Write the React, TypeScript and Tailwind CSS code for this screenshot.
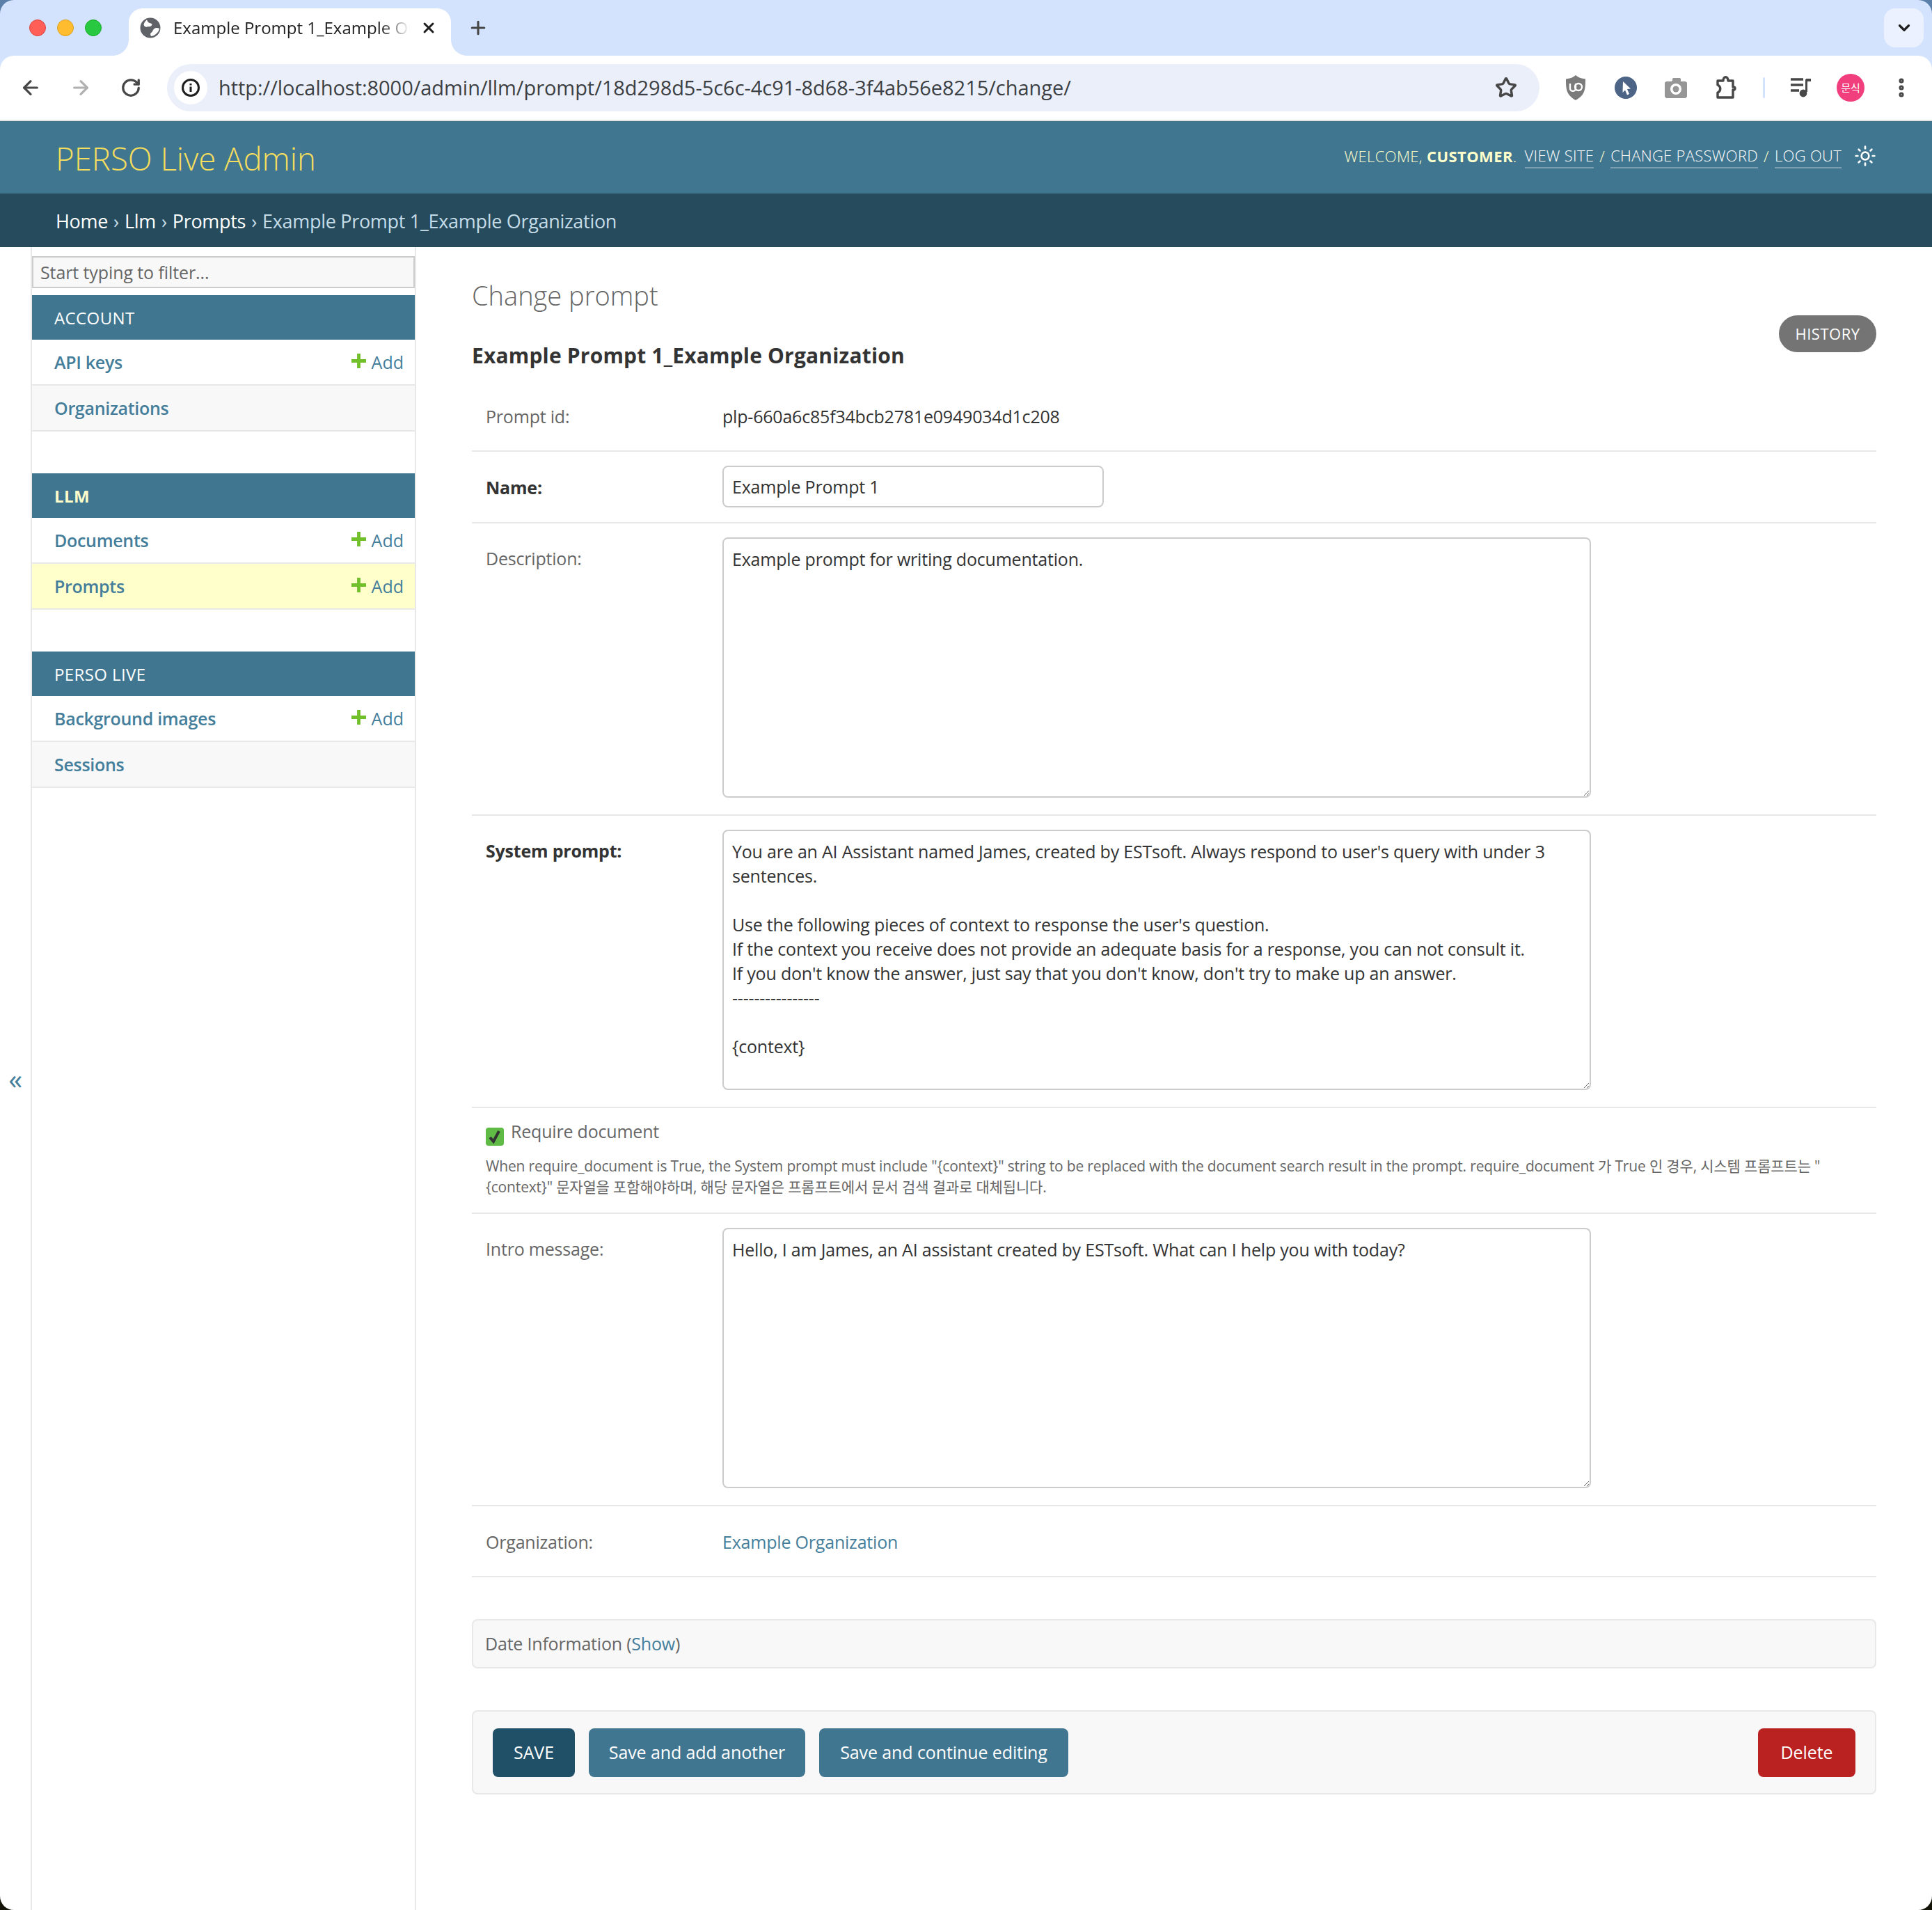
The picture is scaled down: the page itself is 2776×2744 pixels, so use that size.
import React from 'react';
import { ArrowLeft, ArrowRight, RotateCw, Star, Plus, X, ChevronDown, Sun, MoreVertical } from 'lucide-react';

const systemPrompt = `You are an AI Assistant named James, created by ESTsoft. Always respond to user's query with under 3 sentences.

Use the following pieces of context to response the user's question.
If the context you receive does not provide an adequate basis for a response, you can not consult it.
If you don't know the answer, just say that you don't know, don't try to make up an answer.
----------------

{context}`;

const AddLink = () => (
  <a className="flex items-center gap-[8px] text-[25px] tracking-normal text-[#447e9b]">
    <svg width="21" height="21" viewBox="0 0 22 22" className="mt-[-4px]">
      <path d="M8.5 0h5v8.5H22v5h-8.5V22h-5v-8.5H0v-5h8.5z" fill="#70bf2b" />
    </svg>
    Add
  </a>
);

type ModelRow = { name: string; add?: boolean; alt?: boolean; current?: boolean };

const NavModule = ({ title, current, models }: { title: string; current?: boolean; models: ModelRow[] }) => (
  <div className="mb-[60px]">
    <div className={`h-[64px] bg-[#417690] pl-[32px] pt-[2px] flex items-center text-[24px] tracking-[0.4px] ${current ? 'font-bold text-[#ffc]' : 'text-white'}`}>
      {title}
    </div>
    {models.map((m) => (
      <div
        key={m.name}
        className={`h-[66px] border-b-2 border-[#e8e8e8] pl-[32px] pr-[16px] pt-[1px] flex items-center justify-between ${m.current ? 'bg-[#ffc]' : m.alt ? 'bg-[#f8f8f8]' : 'bg-white'}`}
      >
        <a className="text-[25px] tracking-[-0.3px] font-semibold text-[#447e9b]">{m.name}</a>
        {m.add && <AddLink />}
      </div>
    ))}
  </div>
);

const Row = ({ label, bold, labelClass, children, className }: { label: string; bold?: boolean; labelClass?: string; children: React.ReactNode; className?: string }) => (
  <div className={`flex border-b-2 border-[#e8e8e8] pl-[20px] ${className ?? ''}`}>
    <label className={`w-[340px] shrink-0 leading-[35px] ${bold ? 'font-bold text-[#333]' : 'text-[#666]'} ${labelClass ?? ''}`}>{label}</label>
    {children}
  </div>
);

const BigText = ({ value }: { value: string }) => (
  <textarea
    readOnly
    defaultValue={value}
    className="w-[1248px] h-[374px] border-2 border-[#ccc] rounded-[8px] px-[12px] py-[12px] leading-[35px] text-[#333] bg-white outline-none resize"
  />
);

const TabFlare = ({ side }: { side: 'left' | 'right' }) => (
  <svg width="24" height="24" viewBox="0 0 24 24" className={`absolute bottom-0 ${side === 'left' ? 'left-[-24px]' : 'right-[-24px] -scale-x-100'}`}>
    <path d="M24 0v24H0C14 24 24 14 24 0z" fill="#fff" />
  </svg>
);

const Browser = () => (
  <div className="bg-[#d3e3fd] rounded-t-[20px] overflow-hidden tracking-normal">
    {/* tab strip */}
    <div className="h-[80px] flex items-end relative">
      <div className="flex gap-[16px] pl-[42px] pr-[39px] h-[80px] items-center">
        <span className="w-[24px] h-[24px] rounded-full bg-[#ff5f57] border border-[#e0443e]" />
        <span className="w-[24px] h-[24px] rounded-full bg-[#febc2e] border border-[#dea123]" />
        <span className="w-[24px] h-[24px] rounded-full bg-[#28c840] border border-[#1aab29]" />
      </div>
      <div className="relative z-10 w-[463px] h-[68px] bg-white rounded-t-[20px] flex items-center pl-[16px] pr-[20px] pb-[12px]">
        <TabFlare side="left" />
        <TabFlare side="right" />
        <svg width="30" height="30" viewBox="0 0 30 30" className="shrink-0">
          <circle cx="15" cy="15" r="14.5" fill="#5f6368" />
          <path d="M10 3.5c1 3 3 4.5 5.5 5 2 .4 2.5 2 1 3.5-2 2-4 .8-6 1.5-2 .7-4 0-5-3 .6-3 2.500-5.500 4.500-7zM28 16c-3-1.500-6-1-8 .8-2 2-1.500 4-3.500 5-1.500.8-2 3-.5 5.200 5-.5 11-5 12-11z" fill="#fff" />
        </svg>
        <span className="ml-[18px] text-[24px] text-[#1f1f1f] w-[340px] overflow-hidden whitespace-nowrap [mask-image:linear-gradient(to_right,black_88%,transparent)]">
          Example Prompt 1_Example Organization
        </span>
        <X size={24} strokeWidth={3} className="ml-auto text-[#1f1f1f]" />
      </div>
      <Plus size={30} strokeWidth={2.5} className="ml-[24px] mb-[25px] text-[#474747]" />
      <div className="ml-auto mr-[12px] mb-[12px] w-[57px] h-[56px] rounded-[16px] bg-[#ebf1fe] flex items-center justify-center">
        <ChevronDown size={26} strokeWidth={3} className="text-[#1f1f1f]" />
      </div>
    </div>
    {/* toolbar */}
    <div className="h-[92px] bg-white rounded-t-[20px] flex items-center pl-[28px]">
      <ArrowLeft size={32} strokeWidth={2.4} className="text-[#474747]" />
      <ArrowRight size={32} strokeWidth={2.4} className="ml-[40px] text-[#b0b0b0]" />
      <RotateCw size={30} strokeWidth={2.6} className="ml-[41px] text-[#474747]" />
      <div className="ml-[37px] w-[1972px] h-[68px] rounded-full bg-[#ebeff9] flex items-center pl-[10px] pr-[32px]">
        <div className="w-[48px] h-[48px] rounded-full bg-white flex items-center justify-center">
          <svg width="28" height="28" viewBox="0 0 28 28">
            <circle cx="14" cy="14" r="11.5" fill="none" stroke="#1f1f1f" strokeWidth="3" />
            <path d="M14 12.5v7.5M14 8v2.6" stroke="#1f1f1f" strokeWidth="3" />
          </svg>
        </div>
        <span className="ml-[16px] text-[29px] tracking-[-0.04px] text-[#3c3f43]">http://localhost:8000/admin/llm/prompt/18d298d5-5c6c-4c91-8d68-3f4ab56e8215/change/</span>
        <Star size={32} strokeWidth={2.6} className="ml-auto text-[#474747]" />
      </div>
      <div className="flex items-center ml-[36px] gap-[40px]">
        <svg width="32" height="36" viewBox="0 0 32 36">
          <path d="M16 0c3 3 8 5 14 5.500 0 14 0 23-14 30.500C2 28 2 19 2 5.500 8 5 13 3 16 0z" fill="#7b7b7b" />
          <path d="M8 12v7c0 5 8 5 8 0v-7" fill="none" stroke="#fff" strokeWidth="2.400" />
          <circle cx="20" cy="17" r="5" fill="none" stroke="#fff" strokeWidth="2.400" />
        </svg>
        <svg width="32" height="32" viewBox="0 0 32 32">
          <circle cx="16" cy="16" r="16" fill="#4c6485" />
          <path d="M12 7l11 10.500-5 .5 3 7-3 1.500-3-7-3.500 3.500z" fill="#fff" />
        </svg>
        <svg width="32" height="30" viewBox="0 0 32 30">
          <path d="M3 6h6l2-1V2.500C11 1.500 12 1 13 1h8c1 0 2 .5 2 1.500V6h6c1.500 0 3 1 3 2.500V27c0 1.500-1.500 3-3 3H3c-1.500 0-3-1.500-3-3V8.500C0 7 1.500 6 3 6z" fill="#969696" />
          <circle cx="16" cy="17" r="8" fill="#fff" />
          <circle cx="16" cy="17" r="4.500" fill="#969696" />
        </svg>
        <svg width="32" height="36" viewBox="0 0 32 36">
          <path d="M4 8h8c0-7 7-7 7 0h7v9c4-1 4 5 0 4v11H4v-7c5-2 5-9 0-11z" fill="none" stroke="#474747" strokeWidth="3.400" strokeLinejoin="round" />
        </svg>
      </div>
      <div className="w-[3px] h-[30px] bg-[#d3e3fd] ml-[37px] rounded" />
      <svg width="32" height="32" viewBox="0 0 32 32" className="ml-[36px]">
        <path d="M1 4h18M1 12h18M1 20h12" stroke="#474747" strokeWidth="3.400" />
        <path d="M23.500 4v18" stroke="#474747" strokeWidth="3" />
        <path d="M23 3h7v4h-7z" fill="#474747" />
        <circle cx="19" cy="24" r="5.400" fill="#474747" />
      </svg>
      <div className="ml-[35px] w-[40px] h-[40px] rounded-full bg-[#f03f7c] flex items-center justify-center text-[15px] text-white">문식</div>
      <MoreVertical size={34} strokeWidth={3} className="ml-[36px] text-[#474747]" />
    </div>
    <div className="h-[2px] bg-[#e3e3e3]" />
  </div>
);

const AdminHeader = () => (
  <>
    <div className="h-[104px] bg-[#417690] flex items-center justify-between pl-[80px] pr-[80px]">
      <h1 className="text-[45.6px] tracking-normal font-light text-[#f5dd5d] pt-[2px]">PERSO Live Admin</h1>
      <div className="flex items-center text-[22px] font-light text-[#ffc] mt-[-4px] tracking-[0.4px]">
        <span>WELCOME, <strong className="font-bold">CUSTOMER</strong>. </span>
        <a className="ml-[11px] tracking-[0.3px] text-white border-b-2 border-white/30">VIEW SITE</a>
        <span className="mx-[8px]">/</span>
        <a className="tracking-[0.3px] text-white border-b-2 border-white/30">CHANGE PASSWORD</a>
        <span className="mx-[8px]">/</span>
        <a className="tracking-[0.3px] text-white border-b-2 border-white/30">LOG OUT</a>
        <Sun size={32} strokeWidth={2} className="ml-[18px] text-white" />
      </div>
    </div>
    <div className="h-[77px] bg-[#264b5d] flex items-center pl-[80px] pt-[3px] text-[27px] tracking-[-0.3px] text-[#c4dce8]">
      <a className="text-white">Home</a>
      <span className="mx-[8px]">›</span>
      <a className="text-white">Llm</a>
      <span className="mx-[8px]">›</span>
      <a className="text-white">Prompts</a>
      <span className="mx-[8px]">›</span>
      Example Prompt 1_Example Organization
    </div>
  </>
);

const Sidebar = () => (
  <>
    <div className="w-[46px] shrink-0 border-r-2 border-[#e8e8e8] flex items-center justify-center text-[40px] text-[#447e9b]">«</div>
    <nav className="w-[552px] shrink-0 border-r-2 border-[#e8e8e8]">
      <div className="pt-[13px] pb-[10px]">
        <input
          readOnly
          placeholder="Start typing to filter..."
          className="block w-[550px] h-[46px] border-2 border-[#ccc] bg-[#f8f8f8] px-[10px] text-[25px] tracking-[-0.1px] placeholder:text-[#666] outline-none"
        />
      </div>
      <NavModule title="ACCOUNT" models={[{ name: 'API keys', add: true }, { name: 'Organizations', alt: true }]} />
      <NavModule title="LLM" current models={[{ name: 'Documents', add: true }, { name: 'Prompts', add: true, current: true }]} />
      <NavModule title="PERSO LIVE" models={[{ name: 'Background images', add: true }, { name: 'Sessions', alt: true }]} />
    </nav>
  </>
);

const ChangeForm = () => (
  <main className="flex-1 min-w-0 pl-[80px] pr-[80px]">
    <div className="flex justify-between">
      <div>
        <h1 className="mt-[44px] text-[38px] leading-[50px] tracking-normal font-light text-[#666]">Change prompt</h1>
        <h2 className="mt-[42px] text-[30px] leading-[40px] tracking-[0.18px] font-bold text-[#333]">Example Prompt 1_Example Organization</h2>
      </div>
      <a className="mt-[98px] h-[53px] w-[140px] rounded-full bg-[#747474] text-white text-[22px] tracking-[0.5px] flex items-center justify-center">HISTORY</a>
    </div>

    <Row label="Prompt id:" className="h-[118px] pt-[50px]">
      <span className="leading-[35px] text-[#333]">plp-660a6c85f34bcb2781e0949034d1c208</span>
    </Row>
    <Row label="Name:" bold labelClass="pt-[34px]" className="h-[103px]">
      <input
        readOnly
        defaultValue="Example Prompt 1"
        className="mt-[20px] w-[548px] h-[60px] border-2 border-[#ccc] rounded-[8px] px-[12px] text-[#333] outline-none"
      />
    </Row>
    <Row label="Description:" labelClass="pt-[13px]" className="pt-[20px] pb-[24px]">
      <BigText value="Example prompt for writing documentation." />
    </Row>
    <Row label="System prompt:" bold labelClass="pt-[13px]" className="pt-[20px] pb-[24px]">
      <BigText value={systemPrompt} />
    </Row>

    <div className="border-b-2 border-[#e8e8e8] pl-[20px] h-[152px] pt-[16px]">
      <div className="flex items-start">
        <svg width="26" height="26" viewBox="0 0 26 26" className="mt-[12px] shrink-0">
          <rect width="26" height="26" rx="4" fill="#5fbb46" />
          <path d="M6 14l5 6 8-15" fill="none" stroke="#333" strokeWidth="4" />
        </svg>
        <label className="ml-[10px] leading-[35px] text-[#666]">Require document</label>
      </div>
      <p className="mt-[14px] text-[21px] tracking-[-0.16px] leading-[30px] text-[#666]">
        When require_document is True, the System prompt must include "{'{context}'}" string to be replaced with the document search result in the prompt. require_document 가 True 인 경우, 시스템 프롬프트는 "<br />
        {'{context}'}" 문자열을 포함해야하며, 해당 문자열은 프롬프트에서 문서 검색 결과로 대체됩니다.
      </p>
    </div>

    <Row label="Intro message:" labelClass="pt-[13px]" className="pt-[20px] pb-[24px]">
      <BigText value="Hello, I am James, an AI assistant created by ESTsoft. What can I help you with today?" />
    </Row>
    <Row label="Organization:" className="h-[102px] pt-[34px]">
      <a className="leading-[35px] text-[#447e9b]">Example Organization</a>
    </Row>

    <div className="mt-[60px] h-[71px] border-2 border-[#e8e8e8] rounded-[8px] bg-[#f8f8f8] flex items-center pl-[17px] text-[#666]">
      Date Information (<a className="text-[#447e9b]">Show</a>)
    </div>

    <div className="mt-[60px] h-[121px] border-2 border-[#e8e8e8] rounded-[8px] bg-[#f8f8f8] flex items-center px-[28px] gap-[20px] tracking-[-0.1px] text-white">
      <button className="w-[118px] h-[70px] rounded-[8px] bg-[#205067]">SAVE</button>
      <button className="w-[311px] h-[70px] rounded-[8px] bg-[#417690]">Save and add another</button>
      <button className="w-[358px] h-[70px] rounded-[8px] bg-[#417690]">Save and continue editing</button>
      <button className="ml-auto w-[140px] h-[70px] rounded-[8px] bg-[#ba2121]">Delete</button>
    </div>
  </main>
);

export default function App() {
  return (
    <div className="w-[2776px] h-[2744px] overflow-hidden bg-[linear-gradient(to_bottom,#5a7fa8_50%,#141408_50%)] text-[25px] tracking-[-0.2px] font-['Open_Sans','Noto_Sans_CJK_KR',sans-serif]">
      <Browser />
      <AdminHeader />
      <div className="flex h-[2389px] bg-white rounded-b-[20px] overflow-hidden">
        <Sidebar />
        <ChangeForm />
      </div>
    </div>
  );
}
